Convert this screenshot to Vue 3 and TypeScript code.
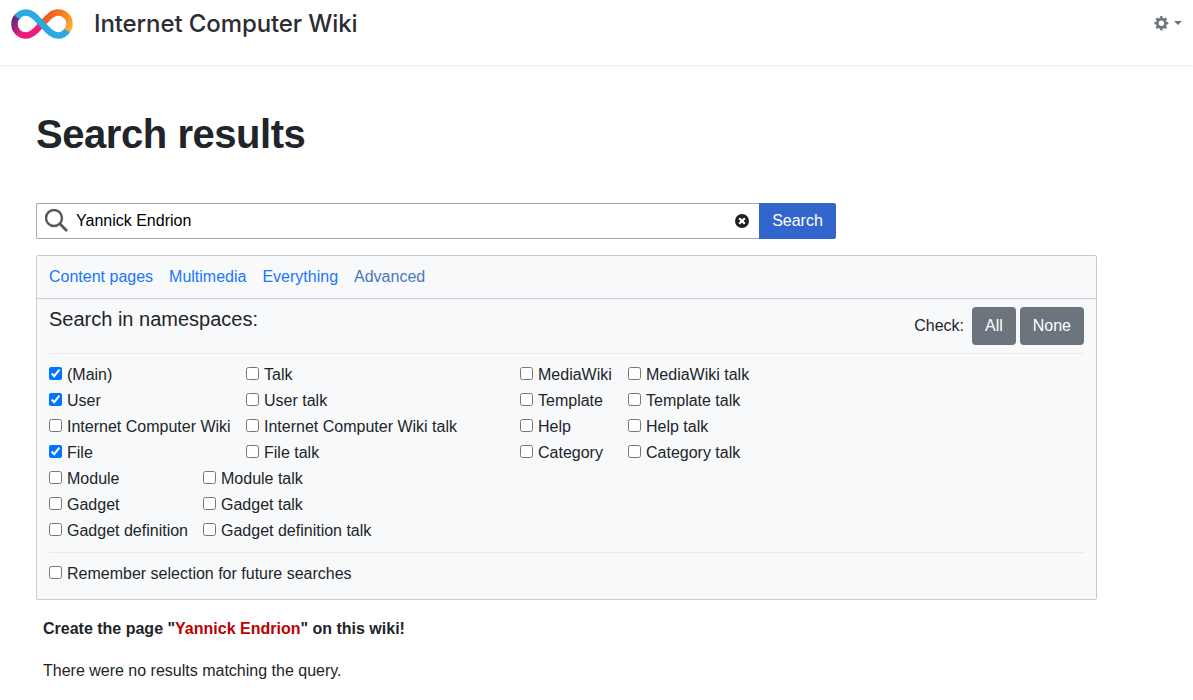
<script setup lang="ts">
interface Ns { label: string; checked?: boolean }
const grid1: Ns[] = [
  { label: '(Main)', checked: true }, { label: 'Talk' }, { label: 'MediaWiki' }, { label: 'MediaWiki talk' },
  { label: 'User', checked: true }, { label: 'User talk' }, { label: 'Template' }, { label: 'Template talk' },
  { label: 'Internet Computer Wiki' }, { label: 'Internet Computer Wiki talk' }, { label: 'Help' }, { label: 'Help talk' },
  { label: 'File', checked: true }, { label: 'File talk' }, { label: 'Category' }, { label: 'Category talk' },
]
const grid2: Ns[] = [
  { label: 'Module' }, { label: 'Module talk' },
  { label: 'Gadget' }, { label: 'Gadget talk' },
  { label: 'Gadget definition' }, { label: 'Gadget definition talk' },
]
const tabs = ['Content pages', 'Multimedia', 'Everything', 'Advanced']
</script>

<template>
  <div class="page">
    <header class="navbar">
      <a class="brand">
        <svg class="logo" width="64" height="32" viewBox="0 0 64 32" fill="none">
          <defs>
            <linearGradient id="lg1" x1="38" y1="6" x2="62" y2="20" gradientUnits="userSpaceOnUse">
              <stop offset="0" stop-color="#f15a24" />
              <stop offset="0.55" stop-color="#f7851f" />
              <stop offset="1" stop-color="#fbb03b" />
            </linearGradient>
            <linearGradient id="lg2" x1="2" y1="10" x2="26" y2="26" gradientUnits="userSpaceOnUse">
              <stop offset="0" stop-color="#522785" />
              <stop offset="0.55" stop-color="#ed1e79" />
            </linearGradient>
          </defs>
          <path d="M8 8C5.800 9.800 4.500 12.800 4.500 16 4.500 22.500 9.500 27.500 16 27.500 22.500 27.500 27 21.500 31 17" stroke="url(#lg2)" stroke-width="6.500" />
          <path d="M33 15C37 10.500 41.500 4.500 48 4.500 54.500 4.500 59.500 9.500 59.500 16 59.500 19.500 58 22 56 24" stroke="url(#lg1)" stroke-width="6.500" />
          <path d="M7 9.500C9 6.200 12.500 4.500 16 4.500 23 4.500 27 11 32 16 37 21 41 27.500 48 27.500 51.500 27.500 55 25.800 57 22.500" stroke="#29abe2" stroke-width="6.500" />
        </svg>
        <span class="brand-text">Internet Computer Wiki</span>
      </a>
      <div class="tools">
        <svg width="16" height="16" viewBox="0 0 16 16" fill="#6f757c">
          <path d="M9.400 1 9.700 2.800 11 3.400 12.600 2.500 14.100 4.100 13.100 5.600 13.600 7 15.400 7.300V9.300L13.600 9.600 13.100 11 14.100 12.500 12.600 14 11 13.100 9.700 13.700 9.400 15.500H7.400L7 13.700 5.700 13.100 4.100 14 2.600 12.500 3.600 11 3.100 9.600 1.300 9.300V7.300L3.100 7 3.600 5.600 2.600 4.100 4.100 2.500 5.700 3.400 7 2.800 7.400 1ZM8.400 5.600A2.700 2.700 0 1 0 8.400 11 2.700 2.700 0 1 0 8.400 5.600Z" fill-rule="evenodd" />
        </svg>
        <span class="caret"></span>
      </div>
    </header>

    <main class="content">
      <h1 class="title">Search results</h1>

      <form class="search" @submit.prevent>
        <div class="search-box">
          <svg class="mag" width="24" height="24" viewBox="0 0 24 24" fill="none" stroke="#54595d" stroke-width="2.400">
            <circle cx="9" cy="9" r="8" />
            <path d="M14.800 14.800 22 22" stroke-width="2.800" />
          </svg>
          <input class="search-input" type="text" value="Yannick Endrion" />
          <svg class="clear" width="14" height="14" viewBox="0 0 14 14">
            <circle cx="7" cy="7" r="7" fill="#202122" />
            <path d="M4.200 4.200 9.800 9.800M9.800 4.200 4.200 9.800" stroke="#fff" stroke-width="2.200" />
          </svg>
        </div>
        <button class="search-btn" type="button">Search</button>
      </form>

      <section class="panel">
        <nav class="tabs">
          <a v-for="t in tabs" :key="t" class="tab" :class="{ visited: t === 'Advanced' }">{{ t }}</a>
        </nav>
        <div class="panel-body">
          <div class="ns-head">
            <div class="ns-title">Search in namespaces:</div>
            <div class="check">
              <span class="check-label">Check:</span>
              <button class="gray-btn" type="button">All</button>
              <button class="gray-btn" type="button">None</button>
            </div>
          </div>
          <hr class="rule rule-top" />
          <div class="ns-grid grid-one">
            <label v-for="n in grid1" :key="n.label" class="ns-item">
              <input type="checkbox" class="cb" :checked="n.checked" />
              <span>{{ n.label }}</span>
            </label>
          </div>
          <div class="ns-grid grid-two">
            <label v-for="n in grid2" :key="n.label" class="ns-item">
              <input type="checkbox" class="cb" :checked="n.checked" />
              <span>{{ n.label }}</span>
            </label>
          </div>
          <hr class="rule rule-bottom" />
          <label class="ns-item remember">
            <input type="checkbox" class="cb" />
            <span>Remember selection for future searches</span>
          </label>
        </div>
      </section>

      <p class="create">Create the page "<a class="red">Yannick Endrion</a>" on this wiki!</p>
      <p class="none">There were no results matching the query.</p>
    </main>
  </div>
</template>

<style>
html, body { margin: 0; background: #fff; }
</style>

<style scoped>
.page {
  font-family: "Liberation Sans", Arial, sans-serif;
  font-size: 16px;
  color: #212529;
  height: 700px;
  overflow: hidden;
}
.navbar {
  height: 65px;
  box-sizing: border-box;
  display: flex;
  align-items: flex-start;
  justify-content: space-between;
  padding: 8px 11px 0 10px;
  box-shadow: 0 1px 3px rgba(0, 0, 0, 0.09);
}
.brand { display: flex; align-items: center; height: 32px; }
.logo { display: block; }
.brand-text {
  font-family: Inter, "Noto Sans", sans-serif;
  font-size: 24px;
  font-weight: 500;
  color: #2b2d33;
  margin: 0 0 2px 20px;
  letter-spacing: -0.1px;
}
.tools { display: flex; align-items: center; gap: 5px; margin-top: 7px; }
.caret {
  width: 0;
  height: 0;
  border-left: 4px solid transparent;
  border-right: 4px solid transparent;
  border-top: 4px solid #6f757c;
}
.content { padding: 0 96px 0 36px; }
.title {
  font-size: 40px;
  font-weight: 700;
  line-height: 48px;
  letter-spacing: -0.45px;
  margin: 45px 0 45px;
}
.search { display: flex; width: 800px; height: 36px; }
.search-box {
  flex: 1;
  display: flex;
  align-items: center;
  box-sizing: border-box;
  border: 1px solid #a2a9b1;
  border-right: 0;
  border-radius: 2px 0 0 2px;
  padding: 0 10px 0 8px;
}
.mag { flex: none; }
.search-input {
  flex: 1;
  border: 0;
  outline: 0;
  padding: 0;
  margin-left: 7px;
  font: inherit;
  color: #000;
  background: transparent;
}
.clear { flex: none; }
.search-btn {
  width: 77px;
  border: 0;
  background: #3366cc;
  color: #fff;
  font: inherit;
  border-radius: 0 2px 2px 0;
  padding: 0;
}
.panel {
  margin-top: 16px;
  width: 1061px;
  box-sizing: border-box;
  border: 1px solid #c8ccd1;
  border-radius: 2px;
  background: #f8f9fa;
}
.tabs {
  height: 43px;
  box-sizing: border-box;
  display: flex;
  align-items: center;
  gap: 16px;
  padding: 0 12px;
  border-bottom: 1px solid #c8ccd1;
}
.tab { color: #1a76fd; }
.visited { color: #4a78bd; }
.panel-body { padding: 8px 12px 12px; }
.ns-head { display: flex; justify-content: space-between; }
.ns-title { font-size: 20px; line-height: 24px; }
.check { display: flex; align-items: center; gap: 4px; height: 38px; }
.check-label { margin-right: 4px; }
.gray-btn {
  height: 38px;
  padding: 0 13px;
  border: 0;
  border-radius: 4px;
  background: #6c757d;
  color: #fff;
  font: inherit;
}
.rule { border: 0; border-top: 1px solid #e9ebee; margin: 0; }
.rule-top { margin-top: 8px; margin-bottom: 8px; }
.rule-bottom { margin-top: 8px; margin-bottom: 8px; }
.ns-grid { display: grid; grid-auto-rows: 26px; }
.grid-one { grid-template-columns: 197px 274px 108px auto; }
.grid-two { grid-template-columns: 154px auto; }
.ns-item { display: flex; align-items: center; white-space: nowrap; }
.remember { height: 26px; }
.cb {
  width: 13px;
  height: 13px;
  margin: 0 5px 4px 0;
  flex: none;
  accent-color: #0075ff;
}
.create { font-weight: 700; margin: 17px 0 0 7px; line-height: 24px; }
.red { color: #ba0000; }
.none { margin: 18px 0 0 7px; line-height: 24px; }
</style>
